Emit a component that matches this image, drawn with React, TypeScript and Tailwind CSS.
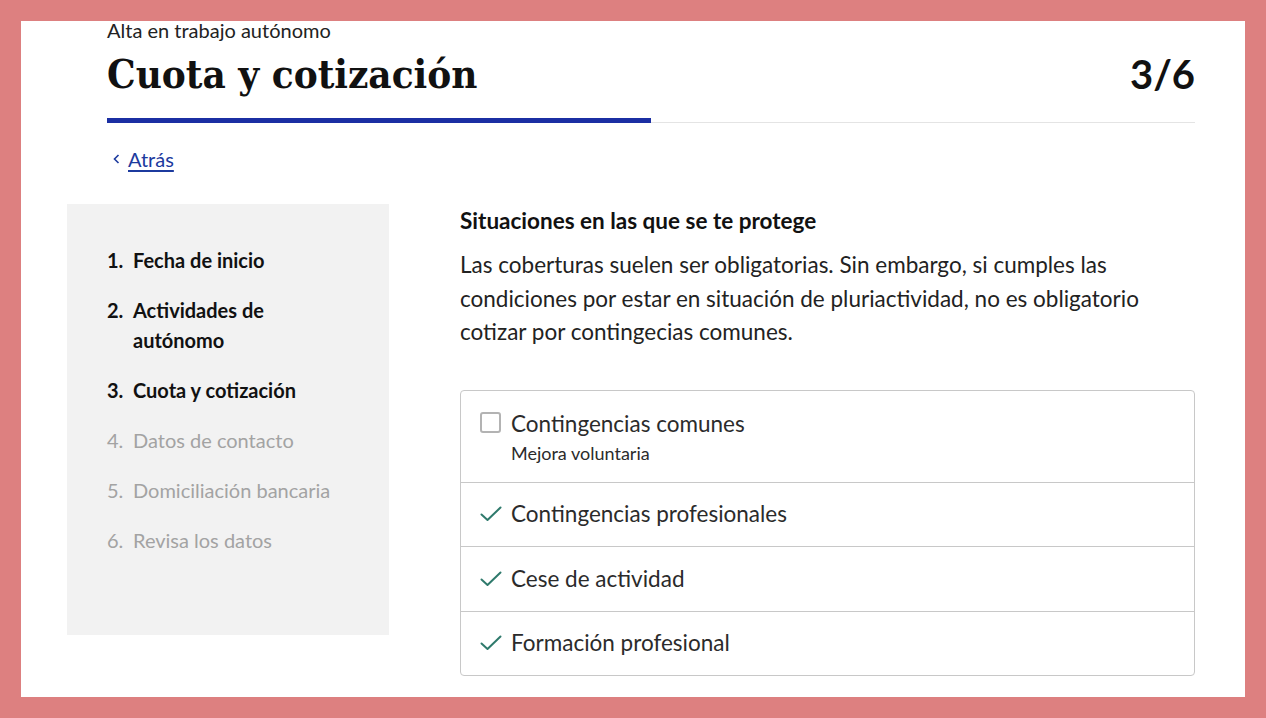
import React from 'react';

const steps = [
  { n: '1.', label: 'Fecha de inicio', done: true },
  { n: '2.', label: 'Actividades de autónomo', done: true },
  { n: '3.', label: 'Cuota y cotización', done: true },
  { n: '4.', label: 'Datos de contacto', done: false },
  { n: '5.', label: 'Domiciliación bancaria', done: false },
  { n: '6.', label: 'Revisa los datos', done: false },
];

const covered = [
  { label: 'Contingencias profesionales', h: 'h-[64px]' },
  { label: 'Cese de actividad', h: 'h-[65px]' },
  { label: 'Formación profesional', h: 'h-[64px]' },
];

const CheckMark = () => (
  <svg width="22" height="16" viewBox="0 0 22 16" fill="none" className="shrink-0">
    <polyline points="1.5,8.5 7.5,14 20.5,1.5" stroke="#2f7a6c" strokeWidth="2" strokeLinecap="round" strokeLinejoin="round" />
  </svg>
);

export default function App() {
  return (
    <div
      className="h-[718px] w-full overflow-hidden bg-[#dd8080] p-[21px]"
      style={{ fontFamily: 'Lato, "Open Sans", sans-serif' }}
    >
      <div className="h-[676px] overflow-hidden bg-white pl-[86px] pr-[50px]">
        {/* Header */}
        <p className="text-[20px] leading-[18px] text-[#222]">Alta en trabajo autónomo</p>
        <div className="mt-[10px] flex items-end justify-between">
          <h1
            className="text-[40px] font-bold leading-[50px] text-[#111]"
            style={{ fontFamily: '"DejaVu Serif Condensed", "DejaVu Serif", serif', fontStretch: 'condensed' }}
          >
            Cuota y cotización
          </h1>
          <span className="text-[40px] font-bold leading-[50px] text-[#111]">3/6</span>
        </div>
        <div className="mt-[19px] flex items-end">
          <div className="h-[5px] w-1/2 bg-[#1b2fa3]" />
          <div className="h-px flex-1 bg-[#e4e4e4]" />
        </div>

        <a href="#" className="mt-[24px] ml-[6px] inline-flex items-center gap-[8px] text-[20px] leading-[24px] text-[#1c3a9e]">
          <svg width="7" height="10" viewBox="0 0 7 10" fill="none">
            <polyline points="5.5,1 1.5,5 5.5,9" stroke="#1c3a9e" strokeWidth="1.6" />
          </svg>
          <span className="underline underline-offset-[3px]">Atrás</span>
        </a>

        <div className="-ml-[40px] mt-[33px] flex">
          {/* Steps */}
          <aside className="h-[431px] w-[322px] shrink-0 bg-[#f2f2f2] pl-[40px] pt-[41px]">
            <ol className="space-y-[20px]">
              {steps.map((s) => (
                <li
                  key={s.n}
                  className={`flex text-[20px] leading-[30px] ${s.done ? 'font-bold text-[#111]' : 'text-[#a3a3a3]'}`}
                >
                  <span className="w-[26px] shrink-0">{s.n}</span>
                  <span className="w-[215px]">{s.label}</span>
                </li>
              ))}
            </ol>
          </aside>

          {/* Content */}
          <section className="ml-[71px] flex-1 pt-[3px]">
            <h2 className="text-[22.5px] font-bold leading-[28px] text-[#111]">Situaciones en las que se te protege</h2>
            <p className="mt-[13px] text-[22.5px] leading-[33.5px] text-[#222]">
              Las coberturas suelen ser obligatorias. Sin embargo, si cumples las condiciones por estar en situación de
              pluriactividad, no es obligatorio cotizar por contingecias comunes.
            </p>

            <div className="mt-[41px] rounded-[4px] border border-[#c8c8c8]">
              <div className="flex gap-[10px] pl-[19px] pt-[20px] pb-[19px]">
                <span className="mt-[1px] h-[21px] w-[21px] shrink-0 rounded-[3px] border-2 border-[#b3b3b3] bg-white" />
                <div>
                  <div className="text-[22.5px] leading-[26px] text-[#2b2b2b]">Contingencias comunes</div>
                  <div className="mt-[6px] text-[18px] leading-[20px] text-[#2b2b2b]">Mejora voluntaria</div>
                </div>
              </div>
              {covered.map((c) => (
                <div key={c.label} className={`flex items-center gap-[9px] border-t border-[#c8c8c8] pl-[19px] ${c.h}`}>
                  <CheckMark />
                  <span className="text-[22.5px] leading-[26px] text-[#2b2b2b]">{c.label}</span>
                </div>
              ))}
            </div>
          </section>
        </div>
      </div>
    </div>
  );
}
